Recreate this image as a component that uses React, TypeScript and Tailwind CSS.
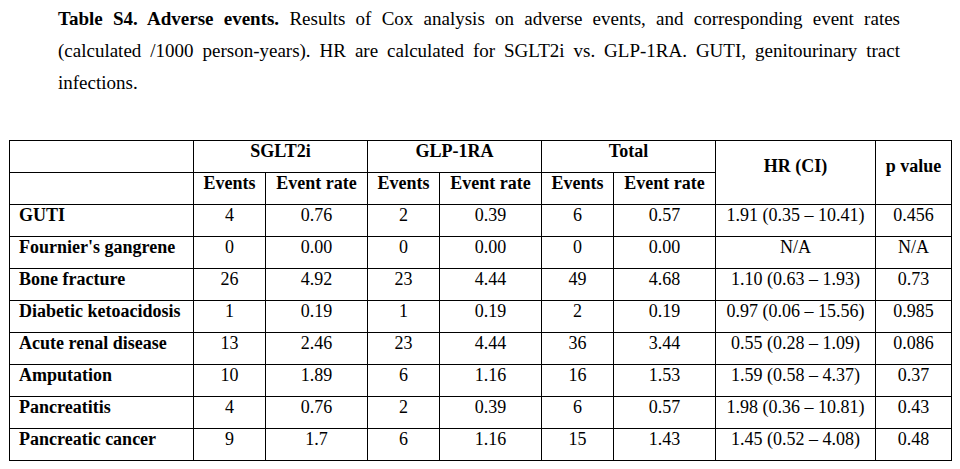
const rows = [
  ["GUTI", "4", "0.76", "2", "0.39", "6", "0.57", "1.91 (0.35 – 10.41)", "0.456"],
  ["Fournier's gangrene", "0", "0.00", "0", "0.00", "0", "0.00", "N/A", "N/A"],
  ["Bone fracture", "26", "4.92", "23", "4.44", "49", "4.68", "1.10 (0.63 – 1.93)", "0.73"],
  ["Diabetic ketoacidosis", "1", "0.19", "1", "0.19", "2", "0.19", "0.97 (0.06 – 15.56)", "0.985"],
  ["Acute renal disease", "13", "2.46", "23", "4.44", "36", "3.44", "0.55 (0.28 – 1.09)", "0.086"],
  ["Amputation", "10", "1.89", "6", "1.16", "16", "1.53", "1.59 (0.58 – 4.37)", "0.37"],
  ["Pancreatitis", "4", "0.76", "2", "0.39", "6", "0.57", "1.98 (0.36 – 10.81)", "0.43"],
  ["Pancreatic cancer", "9", "1.7", "6", "1.16", "15", "1.43", "1.45 (0.52 – 4.08)", "0.48"],
];

const widths = [184, 72, 102, 72, 102, 72, 102, 160, 76];

export default function App() {
  return (
    <div className="min-h-screen bg-white text-black font-[family-name:Liberation_Serif,serif] text-[18px]">
      <p className="ml-[58px] w-[842px] pt-[3px] text-justify text-[19px] leading-[32px]">
        <b>Table S4. Adverse events.</b> Results of Cox analysis on adverse events, and corresponding event rates
        (calculated /1000 person-years). HR are calculated for SGLT2i vs. GLP-1RA. GUTI, genitourinary tract
        infections.
      </p>

      <table className="ml-[9px] mt-[41px] table-fixed border-collapse leading-[20px]">
        <colgroup>
          {widths.map((w, i) => (
            <col key={i} style={{ width: w }} />
          ))}
        </colgroup>
        <thead className="font-bold">
          <tr className="h-[32px]">
            <th className="border border-black"></th>
            <th colSpan={2} className="border border-black align-top pt-0">SGLT2i</th>
            <th colSpan={2} className="border border-black align-top pt-0">GLP-1RA</th>
            <th colSpan={2} className="border border-black align-top pt-0">Total</th>
            <th rowSpan={2} className="border border-black align-middle pb-[13px]">HR (CI)</th>
            <th rowSpan={2} className="border border-black align-middle pb-[13px]">p value</th>
          </tr>
          <tr className="h-[32px]">
            <th className="border border-black"></th>
            <th className="border border-black align-top pt-0">Events</th>
            <th className="border border-black align-top pt-0">Event rate</th>
            <th className="border border-black align-top pt-0">Events</th>
            <th className="border border-black align-top pt-0">Event rate</th>
            <th className="border border-black align-top pt-0">Events</th>
            <th className="border border-black align-top pt-0">Event rate</th>
          </tr>
        </thead>
        <tbody>
          {rows.map((r) => (
            <tr key={r[0]} className="h-[32px]">
              {r.map((c, i) => (
                <td
                  key={i}
                  className={
                    i === 0
                      ? "border border-black align-top pt-0 pl-[9px] font-bold whitespace-nowrap"
                      : "border border-black align-top pt-0 text-center whitespace-nowrap"
                  }
                >
                  {c}
                </td>
              ))}
            </tr>
          ))}
        </tbody>
      </table>
    </div>
  );
}
